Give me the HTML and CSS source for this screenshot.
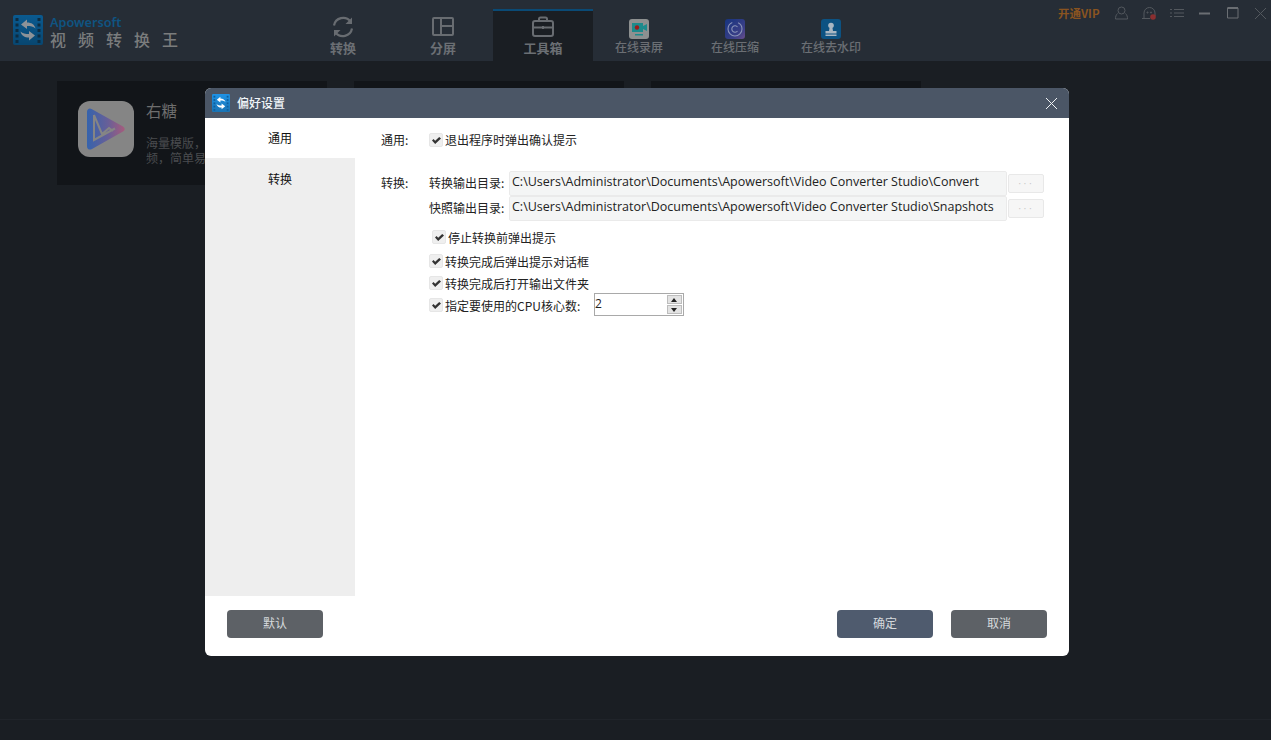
FILE: index.html
```html
<!DOCTYPE html>
<html lang="zh-CN">
<head>
<meta charset="utf-8">
<title>视频转换王</title>
<link rel="stylesheet" href="styles.css">
</head>
<body>
<svg class="defs" width="0" height="0" aria-hidden="true">
  <defs>
    <linearGradient id="shade" x1="0" x2="0" y1="0" y2="1"><stop offset="0" stop-color="#000" stop-opacity="0"/><stop offset="1" stop-color="#000" stop-opacity=".22"/></linearGradient>
    <symbol id="film" viewBox="0 0 30 30">
      <rect x="0" y="0" width="30" height="30" rx="2" fill="currentColor"/>
      <rect x="0" y="0" width="30" height="30" rx="2" fill="url(#shade)"/>
      <g class="film-dots">
        <rect x="2.500" y="3" width="3" height="3"/><rect x="2.500" y="8.500" width="3" height="3"/><rect x="2.500" y="14" width="3" height="3"/><rect x="2.500" y="19.500" width="3" height="3"/><rect x="2.500" y="25" width="3" height="3"/>
        <rect x="24.500" y="3" width="3" height="3"/><rect x="24.500" y="8.500" width="3" height="3"/><rect x="24.500" y="14" width="3" height="3"/><rect x="24.500" y="19.500" width="3" height="3"/><rect x="24.500" y="25" width="3" height="3"/>
      </g>
      <path class="arrows" d="M8 9.500L14 4.500V7.500C18.500 7.500 21.500 9.500 22.500 13.500C20.500 11.500 17.500 11 14 11V14ZM22 20.500L16 25.500V22.500C11.500 22.500 8.500 20.500 7.500 16.500C9.500 18.500 12.500 19 16 19V16Z"/>
    </symbol>
  </defs>
</svg>
<div class="app">
  <header class="topbar">
    <div class="brand">
      <svg class="brand-logo" width="30" height="30"><use href="#film"/></svg>
      <div class="brand-text">
        <div class="brand-en">Apowersoft</div>
        <div class="brand-cn">视频转换王</div>
      </div>
    </div>
    <nav class="tabs">
      <div class="tab">
        <svg class="tab-icon" width="24" height="24" viewBox="0 0 24 24" fill="none" stroke="#686c71" stroke-width="2.200"><path d="M3 10.500A9.300 9.300 0 0 1 19.500 6.500"/><path d="M21 13.500A9.300 9.300 0 0 1 4.500 17.500"/><path d="M21 2.500V9h-6.500z" fill="#686c71" stroke="none"/><path d="M3 21.500V15h6.500z" fill="#686c71" stroke="none"/></svg>
        <span>转换</span>
      </div>
      <div class="tab">
        <svg class="tab-icon" width="24" height="24" viewBox="0 0 24 24" fill="none" stroke="#686c71" stroke-width="2"><rect x="2" y="3" width="20" height="17" rx="1"/><path d="M10 3v17M10 11h12"/></svg>
        <span>分屏</span>
      </div>
      <div class="tab active">
        <svg class="tab-icon" width="24" height="24" viewBox="0 0 24 24" fill="none" stroke="#686c71" stroke-width="2"><rect x="2" y="6" width="20" height="15" rx="2"/><path d="M8 6V4a1.500 1.500 0 0 1 1.500-1.500h5A1.500 1.500 0 0 1 16 4v2M2 12.500h20M12 11v3"/></svg>
        <span>工具箱</span>
      </div>
      <div class="tab small first-small">
        <span class="app-icon rec"><svg width="20" height="20" viewBox="0 0 20 20"><path d="M3 4h11v9H3z" fill="#1c8a8c"/><path d="M14 7l4-2v7l-4-2z" fill="#1c8a8c"/><circle cx="8" cy="8.500" r="2.200" fill="#9b1b1b"/><path d="M6 15h8v1.500H6z" fill="#1c8a8c"/></svg></span>
        <span>在线录屏</span>
      </div>
      <div class="tab small">
        <span class="app-icon zip"><svg width="20" height="20" viewBox="0 0 20 20" fill="none" stroke="#8a93b8" stroke-width="1.100"><circle cx="10" cy="10" r="7" stroke-dasharray="30 6"/><path d="M12.500 8a3.200 3.200 0 1 0 0 4"/></svg></span>
        <span>在线压缩</span>
      </div>
      <div class="tab small">
        <span class="app-icon mark"><svg width="20" height="20" viewBox="0 0 20 20" fill="#a8b6c2"><circle cx="10" cy="6.500" r="2.800"/><path d="M8.500 9h3l.5 3h3.500v2.500h-11V12H8zM4.500 15.500h11V17h-11z"/></svg></span>
        <span>在线去水印</span>
      </div>
    </nav>
    <div class="controls">
      <span class="vip">开通VIP</span>
      <svg class="ctl user" width="13" height="14" viewBox="0 0 13 14" fill="none" stroke="#53585e"><circle cx="6.500" cy="4.500" r="3.500"/><path d="M2.500 7.500C1 9 .5 10.500.5 13h12c0-2.500-.5-4-2-5.500"/></svg>
      <svg class="ctl bell" width="16" height="14" viewBox="0 0 16 14" fill="none" stroke="#53585e"><path d="M1 12.500h2V7a5.500 5.500 0 0 1 11 0v3"/><path d="M3 12.500h6" /><circle cx="6.500" cy="6.500" r=".6" fill="#53585e"/><circle cx="10" cy="6.500" r=".6" fill="#53585e"/><circle cx="12" cy="11" r="2.800" fill="#8a2f30" stroke="none"/></svg>
      <svg class="ctl list" width="14" height="10" viewBox="0 0 14 10" stroke="#53585e"><path d="M0 1.500h2M4 1.500h10M0 5h2M4 5h10M0 8.500h2M4 8.500h10"/></svg>
      <svg class="ctl min" width="12" height="3" viewBox="0 0 12 3"><rect width="11" height="2" y=".5" fill="#6a6e73"/></svg>
      <svg class="ctl max" width="12" height="12" viewBox="0 0 12 12" fill="none" stroke="#6a6e73"><path d="M.5 1h10.500v10H.5z"/><path d="M.5 1h10.500" stroke-width="2"/></svg>
      <svg class="ctl close" width="13" height="13" viewBox="0 0 13 13" stroke="#53585e"><path d="M1 1l11 11M12 1L1 12"/></svg>
    </div>
  </header>
  <main class="content">
    <article class="card">
      <div class="card-icon">
        <svg width="56" height="56" viewBox="0 0 56 56" fill="none">
          <defs><linearGradient id="yt" x1="0" x2="1" y1="0" y2="0"><stop offset="0" stop-color="#3563ad"/><stop offset=".55" stop-color="#675f98"/><stop offset="1" stop-color="#a65c7c"/></linearGradient></defs>
          <path d="M9 11c0-3 2.500-4.300 5-2.800L45 25.500c2.300 1.300 2.300 3.800 0 5.100L14 48c-2.500 1.400-5 .2-5-2.800z" fill="url(#yt)"/>
          <path d="M16 14v25l21-11.500M16 14l8 19 7-6 4 3" stroke="#858585" stroke-width="2"/>
        </svg>
      </div>
      <div class="card-body">
        <h3>右糖</h3>
        <p>海量模版&#xFF0C;视频&#xFF0C;简单易用</p>
      </div>
    </article>
    <article class="card"></article>
    <article class="card"></article>
  </main>
  <div class="status"></div>
</div>

<section class="dialog">
  <header class="dlg-title">
    <svg class="dlg-logo" width="18" height="18"><use href="#film"/></svg>
    <span class="dlg-name">偏好设置</span>
    <svg class="dlg-close" width="13" height="13" viewBox="0 0 13 13" stroke="#f1f3f5"><path d="M1 1l11 11M12 1L1 12"/></svg>
  </header>
  <div class="dlg-main">
    <aside class="side">
      <div class="side-item on">通用</div>
      <div class="side-item">转换</div>
    </aside>
    <div class="pane">
      <div class="group general">
        <div class="group-label">通用:</div>
        <label class="check"><i class="box"></i>退出程序时弹出确认提示</label>
      </div>
      <div class="group convert">
        <div class="group-label">转换:</div>
        <div class="group-body">
          <div class="path-row">
            <span class="path-label">转换输出目录:</span>
            <span class="path-field">C:\Users\Administrator\Documents\Apowersoft\Video Converter Studio\Convert</span>
            <span class="path-btn">···</span>
          </div>
          <div class="path-row">
            <span class="path-label">快照输出目录:</span>
            <span class="path-field">C:\Users\Administrator\Documents\Apowersoft\Video Converter Studio\Snapshots</span>
            <span class="path-btn">···</span>
          </div>
          <label class="check stop"><i class="box"></i>停止转换前弹出提示</label>
          <label class="check tight first"><i class="box"></i>转换完成后弹出提示对话框</label>
          <label class="check tight"><i class="box"></i>转换完成后打开输出文件夹</label>
          <div class="check tight cpu">
            <i class="box"></i><span class="cpu-text">指定要使用的CPU核心数:</span>
            <span class="spin"><span class="spin-val">2</span><span class="spin-btns"><b class="up"></b><b class="down"></b></span></span>
          </div>
        </div>
      </div>
    </div>
  </div>
  <footer class="dlg-foot">
    <button class="btn">默认</button>
    <span class="foot-gap"></span>
    <button class="btn primary">确定</button>
    <button class="btn">取消</button>
  </footer>
</section>
</body>
</html>
```
FILE: styles.css
```css
* { box-sizing: border-box; }
html, body { margin: 0; padding: 0; height: 100%; }
body {
  width: 1271px;
  height: 740px;
  overflow: hidden;
  position: relative;
  background: #1a1e23;
  font-family: "Noto Sans CJK SC", "Noto Sans", sans-serif;
  font-size: 12px;
  color: #1c1c1c;
}
.defs { position: absolute; }
.app { display: flex; flex-direction: column; height: 740px; }

/* top bar */
.topbar {
  height: 61px;
  background: #262d36;
  display: flex;
  flex: none;
}
.brand { width: 293px; flex: none; display: flex; padding: 15px 0 0 13px; }
.brand-logo { color: #0a5a90; --arrow: #8c9298; --dots: #0d2c42; }
.arrows { fill: var(--arrow); }
.film-dots { fill: var(--dots); }
.brand-text { margin-left: 7px; }
.brand-en { font: 600 12.700px/15px "Noto Sans", sans-serif; color: #0f5482; }
.brand-cn { font-size: 16px; line-height: 18px; color: #7a7c7d; letter-spacing: 12px; white-space: nowrap; font-weight: 500; }

.tabs { display: flex; flex: none; height: 61px; }
.tab {
  width: 100px;
  display: flex;
  flex-direction: column;
  align-items: center;
  padding-top: 15px;
  color: #6b6f74;
  font-size: 13px;
  line-height: 17px;
  font-weight: 700;
}
.tab-icon { height: 24px; }
.tab.active { background: #1a1e23; border-top: 2px solid #0a4a75; margin-top: 9px; padding-top: 4px; }
.tab.small { width: 96px; padding-top: 19px; font-size: 12px; line-height: 14px; white-space: nowrap; font-weight: 500; }
.first-small { margin-left: -2px; }
.app-icon { width: 20px; height: 20px; border-radius: 3px; display: block; margin-bottom: 1px; }
.app-icon svg { display: block; }
.rec { background: #8d9090; }
.zip { background: linear-gradient(135deg, #16347f, #3b3f87 70%, #6a4f8c); }
.mark { background: #0c5282; }

.controls { flex: 1; display: flex; align-items: center; height: 26px; position: relative; }
.vip { color: #8a5420; font-weight: 700; font-size: 11.500px; margin-left: 179px; white-space: nowrap; }
.ctl { display: block; flex: none; }
.user { margin-left: 15px; }
.bell { margin-left: 13px; }
.list { margin-left: 13px; }
.min { margin-left: 15px; }
.max { margin-left: 16px; }
.close { margin-left: 15px; }

/* dimmed content */
.content { flex: 1; display: flex; padding: 20px 0 0 57px; gap: 27px; align-items: flex-start; }
.card { width: 270px; height: 104px; background: #121519; display: flex; padding: 20px 0 0 21px; }
.card-icon { width: 56px; height: 56px; border-radius: 12px; background: #858585; flex: none; }
.card-icon svg { display: block; }
.card-body { margin-left: 12px; width: 170px; }
.card-body h3 { margin: -2px 0 0; font-weight: 400; font-size: 15.500px; line-height: 22px; color: #6d6d6d; }
.card-body p { margin: 14px 0 0; font-size: 12px; line-height: 15px; color: #4a4c4f; width: 72px; }
.status { height: 21px; border-top: 1px solid #20242a; flex: none; }

/* dialog */
.dialog {
  position: absolute;
  left: 205px;
  top: 88px;
  width: 864px;
  height: 568px;
  background: #fff;
  border-radius: 6px;
  overflow: hidden;
  display: flex;
  flex-direction: column;
}
.dlg-title { height: 30px; flex: none; background: #4b5666; display: flex; align-items: center; padding: 0 11px 0 7px; }
.dlg-logo { color: #1f93e6; --arrow: #fff; --dots: #0e5f9e; flex: none; }
.dlg-name { margin-left: 7px; margin-top: -2px; color: #f0f4f8; font-size: 12px; font-weight: 500; flex: 1; }
.dlg-close { flex: none; }
.dlg-main { flex: 1; display: flex; min-height: 0; }
.side { width: 150px; flex: none; background: #eeeeee; }
.side-item { height: 40px; display: flex; align-items: center; justify-content: center; color: #111; }
.side-item.on { background: #fff; padding-bottom: 1px; }
.pane { flex: 1; padding: 0 25px 0 26px; }
.group { display: flex; }
.group-label { width: 48px; flex: none; color: #222; }
.general { padding-top: 13px; line-height: 18px; }
.convert { margin-top: 22px; }
.convert .group-label { padding-top: 3px; line-height: 18px; }
.group-body { flex: 1; }

.check { display: flex; align-items: center; height: 22px; color: #222; white-space: nowrap; }
.general .check { height: 18px; }
.box {
  width: 14px;
  height: 14px;
  margin-right: 2px;
  flex: none;
  background: #efefef;
  border: 1px solid #e6e6e6;
  border-radius: 2px;
  position: relative;
}
.box::after {
  content: "";
  position: absolute;
  left: 2px;
  top: 3px;
  width: 9px;
  height: 7px;
  background: #333;
  clip-path: polygon(0 3.500px, 1.500px 2px, 3.200px 3.700px, 7.200px 0, 9px 1.500px, 3.200px 7px);
}
.path-row { display: flex; align-items: center; height: 25px; }
.path-label { width: 80px; flex: none; color: #222; white-space: nowrap; padding-bottom: 2px; }
.path-field {
  width: 498px;
  height: 25px;
  flex: none;
  background: #f4f5f5;
  border: 1px solid #eaeaea;
  border-radius: 2px;
  padding-left: 2px;
  line-height: 20px;
  font-family: "Open Sans", "Noto Sans CJK SC", sans-serif;
  font-size: 12.500px;
  color: #222;
  white-space: nowrap;
  overflow: hidden;
}
.path-btn {
  width: 36px;
  height: 19px;
  margin-left: 1px;
  flex: none;
  background: #f6f6f6;
  border: 1px solid #e8e8e8;
  border-radius: 2px;
  color: #c8c8c8;
  text-align: center;
  font-family: "Liberation Sans", sans-serif;
  font-size: 10px;
  line-height: 17px;
  letter-spacing: 2px;
}
.stop { margin: 5px 0 0 3px; height: 22px; }
.first { margin-top: 2px; }
.cpu-text { width: 149px; flex: none; }
.spin {
  width: 90px;
  height: 23px;
  margin-bottom: 2px;
  border: 1px solid #a9a9a9;
  display: flex;
  justify-content: space-between;
  font-family: "Open Sans", sans-serif;
  font-size: 12px;
  line-height: 20px;
}
.spin-btns { width: 15px; display: flex; flex-direction: column; margin: 1px 1px 1px 0; gap: 1px; }
.spin-btns b { flex: 1; background: #e3e3e3; border: 1px solid #bdbdbd; position: relative; }
.spin-btns b::after {
  content: "";
  position: absolute;
  left: 3px;
  border-left: 3.500px solid transparent;
  border-right: 3.500px solid transparent;
}
.up::after { top: 2px; border-bottom: 4px solid #222; }
.down::after { top: 2px; border-top: 4px solid #222; }

.dlg-foot { height: 60px; flex: none; display: flex; padding: 14px 22px 0; }
.foot-gap { flex: 1; }
.btn {
  width: 96px;
  height: 28px;
  border: 0;
  border-radius: 4px;
  background: #5d6166;
  color: #d5d9dc;
  font: 12px/24px "Noto Sans CJK SC", sans-serif;
  padding: 0 0 3px;
}
.btn.primary { background: #4f5b6e; margin-right: 18px; }
```
